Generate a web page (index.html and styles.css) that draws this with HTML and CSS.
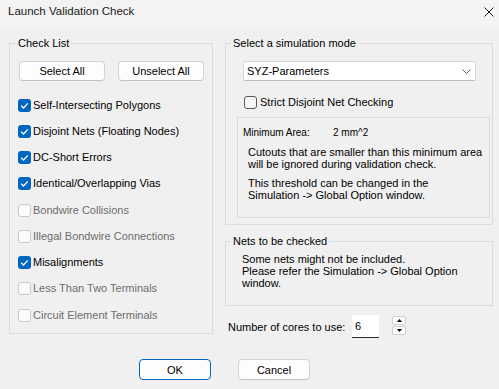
FILE: index.html
```html
<!DOCTYPE html>
<html>
<head>
<meta charset="utf-8">
<link rel="stylesheet" href="styles.css">
</head>
<body>
<div class="window">
  <div class="titlebar">
    <span class="title">Launch Validation Check</span>
    <svg class="close" width="10" height="10" viewBox="0 0 10 10"><path d="M0.5 0.5 L9.5 9.5 M9.5 0.5 L0.5 9.5" stroke="#1a1a1a" stroke-width="1" fill="none"/></svg>
  </div>
  <div class="main">
    <div class="group checklist">
      <div class="legend">Check List</div>
      <div class="btnrow">
        <button class="btn wide">Select All</button>
        <button class="btn wide">Unselect All</button>
      </div>
      <ul class="cblist">
        <li class="cbrow"><span class="cb on"><svg width="13" height="13" viewBox="0 0 13 13"><path d="M3.2 6.8 L5.5 9 L9.8 4.4" stroke="#fff" stroke-width="1.3" fill="none"/></svg></span><span>Self-Intersecting Polygons</span></li>
        <li class="cbrow"><span class="cb on"><svg width="13" height="13" viewBox="0 0 13 13"><path d="M3.2 6.8 L5.5 9 L9.8 4.4" stroke="#fff" stroke-width="1.3" fill="none"/></svg></span><span>Disjoint Nets (Floating Nodes)</span></li>
        <li class="cbrow"><span class="cb on"><svg width="13" height="13" viewBox="0 0 13 13"><path d="M3.2 6.8 L5.5 9 L9.8 4.4" stroke="#fff" stroke-width="1.3" fill="none"/></svg></span><span>DC-Short Errors</span></li>
        <li class="cbrow"><span class="cb on"><svg width="13" height="13" viewBox="0 0 13 13"><path d="M3.2 6.8 L5.5 9 L9.8 4.4" stroke="#fff" stroke-width="1.3" fill="none"/></svg></span><span>Identical/Overlapping Vias</span></li>
        <li class="cbrow disabled"><span class="cb off"></span><span>Bondwire Collisions</span></li>
        <li class="cbrow disabled"><span class="cb off"></span><span>Illegal Bondwire Connections</span></li>
        <li class="cbrow"><span class="cb on"><svg width="13" height="13" viewBox="0 0 13 13"><path d="M3.2 6.8 L5.5 9 L9.8 4.4" stroke="#fff" stroke-width="1.3" fill="none"/></svg></span><span>Misalignments</span></li>
        <li class="cbrow disabled"><span class="cb off"></span><span>Less Than Two Terminals</span></li>
        <li class="cbrow disabled"><span class="cb off"></span><span>Circuit Element Terminals</span></li>
      </ul>
    </div>
    <div class="rightcol">
      <div class="group simmode">
        <div class="legend">Select a simulation mode</div>
        <div class="select">
          <span>SYZ-Parameters</span>
          <svg width="9" height="5" viewBox="0 0 9 5"><path d="M0.5 0.5 L4.5 4.5 L8.5 0.5" stroke="#5f5f5f" stroke-width="1" fill="none"/></svg>
        </div>
        <div class="cbrow strict"><span class="cb empty"></span><span>Strict Disjoint Net Checking</span></div>
        <div class="infobox">
          <div class="minarea"><span class="minlabel">Minimum Area:</span><span>2 mm^2</span></div>
          <p class="note">Cutouts that are smaller than this minimum area<br>will be ignored during validation check.</p>
          <p class="note">This threshold can be changed in the<br>Simulation -&gt; Global Option window.</p>
        </div>
      </div>
      <div class="group nets">
        <div class="legend">Nets to be checked</div>
        <p class="netstext">Some nets might not be included.<br>Please refer the Simulation -&gt; Global Option<br>window.</p>
      </div>
      <div class="cores">
        <span class="coreslabel">Number of cores to use:</span>
        <span class="numinput">6</span>
        <div class="spinner">
          <span class="spin"><svg width="5" height="3" viewBox="0 0 5 3"><path d="M2.5 0 L5 3 L0 3 Z" fill="#000"/></svg></span>
          <span class="spin"><svg width="5" height="3" viewBox="0 0 5 3"><path d="M0 0 L5 0 L2.5 3 Z" fill="#000"/></svg></span>
        </div>
      </div>
    </div>
  </div>
  <div class="footer">
    <button class="btn action default">OK</button>
    <button class="btn action">Cancel</button>
  </div>
</div>
</body>
</html>
```
FILE: styles.css
```css
* { box-sizing: border-box; }
html, body { margin: 0; padding: 0; }
body {
  width: 499px;
  height: 389px;
  background: #f0f0f0;
  font-family: "Liberation Sans", Arial, sans-serif;
  font-size: 11px;
  color: #000;
  overflow: hidden;
}
.window { width: 499px; height: 389px; }
.titlebar {
  height: 30px;
  background: #f3f3f3;
  display: flex;
  align-items: center;
  justify-content: space-between;
  padding: 0 5px 8px 8px;
}
.title { font-size: 11.5px; color: #1a1a1a; }
.close { display: block; margin-top: 2px; }
.main {
  display: flex;
  gap: 12px;
  padding: 13px 0 0 9px;
}
.group {
  border: 1px solid #dcdcdc;
}
.legend {
  display: block;
  width: fit-content;
  margin: -8px 0 0 6px;
  padding: 0 2px;
  background: #f0f0f0;
  line-height: 14px;
  height: 14px;
}
.checklist { width: 204px; height: 291px; }
.btnrow { display: flex; gap: 13px; margin: 11px 0 0 9px; }
.btn {
  font-family: "Liberation Sans", Arial, sans-serif;
  font-size: 11px;
  color: #000;
  background: #fdfdfd;
  border: 1px solid #d3d3d3;
  border-bottom-color: #c2c2c2;
  border-radius: 4px;
  padding: 0;
  margin: 0;
}
.wide { width: 86px; height: 20px; }
.cblist { list-style: none; margin: 11px 0 0 8px; padding: 0; }
.cbrow {
  display: flex;
  align-items: center;
  gap: 2px;
  height: 26.25px;
  line-height: 13px;
}
.cb {
  display: block;
  width: 13px;
  height: 13px;
  border-radius: 3px;
  flex: none;
}
.cb svg { display: block; }
.cb.on { background: #0067c0; }
.cb.off { background: #fbfbfb; border: 1px solid #c9c9c9; }
.cb.empty { background: #f7f7f7; border: 1px solid #595959; }
.disabled { color: #6d6d6d; }
.rightcol { width: 268px; display: flex; flex-direction: column; }
.simmode { height: 182px; }
.simmode .legend { margin-left: 5px; }
.select {
  margin: 11px 0 0 17px;
  width: 233px;
  height: 20px;
  background: #fff;
  border: 1px solid #d6d6d6;
  border-bottom-color: #bdbdbd;
  border-radius: 2px;
  display: flex;
  align-items: center;
  justify-content: space-between;
  padding: 0 4px 0 3px;
}
.select svg { display: block; }
.strict { height: 13px; margin: 15px 0 0 18px; gap: 3px; }
.infobox {
  margin: 8px 0 0 11px;
  width: 253px;
  height: 101px;
  border: 1px solid #dcdcdc;
  padding: 9px 0 0 5px;
}
.minarea { font-size: 10px; line-height: 12px; height: 12px; display: flex; }
.minlabel { width: 90px; }
.note { margin: 7px 0 0 5px; line-height: 12px; }
.nets { margin-top: 16px; height: 65px; }
.nets .legend { margin-left: 5px; }
.netstext { margin: 5px 0 0 16px; line-height: 12px; }
.cores { display: flex; align-items: center; margin: 9px 0 0 3px; height: 23px; }
.coreslabel { width: 124px; }
.numinput {
  width: 27px;
  height: 23px;
  background: #fff;
  border-bottom: 1px solid #2b2b2b;
  padding: 0 0 0 3px;
  line-height: 22px;
}
.spinner { display: flex; flex-direction: column; gap: 1px; margin-left: 13px; margin-top: -3px; }
.spin {
  width: 14px;
  height: 9px;
  background: #fdfdfd;
  border: 1px solid #cfcfcf;
  border-radius: 2px;
  display: flex;
  align-items: center;
  justify-content: center;
}
.spin svg { display: block; }
.footer { display: flex; gap: 27px; margin: 21px 0 0 139px; }
.action { width: 72px; height: 21px; }
.default { border-color: #0067c0; }
```
